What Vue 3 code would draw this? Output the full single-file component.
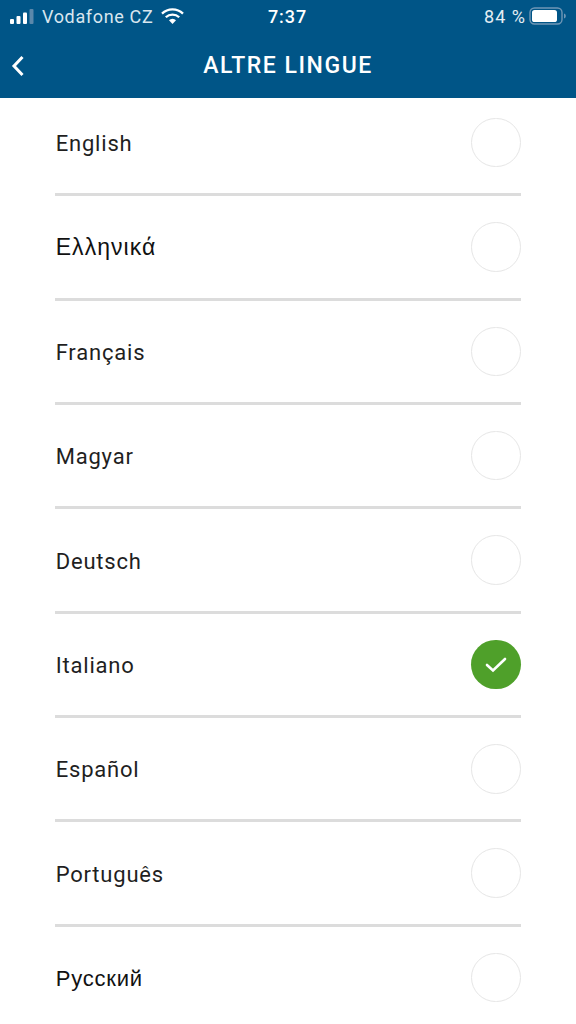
<script setup>
const languages = [
  { name: 'English', kind: '' },
  { name: 'Ελληνικά', kind: 'name-greek' },
  { name: 'Français', kind: '' },
  { name: 'Magyar', kind: '' },
  { name: 'Deutsch', kind: '' },
  { name: 'Italiano', kind: '', selected: true },
  { name: 'Español', kind: '' },
  { name: 'Português', kind: '' },
  { name: 'Русский', kind: 'name-cyrillic' }
]
</script>

<template>
  <div class="screen">
    <header class="header">
      <div class="status">
        <div class="status-left">
          <svg class="signal" width="25" height="16" viewBox="0 0 25 16">
            <rect x="0" y="11" width="4" height="5" rx="1" fill="#fff" />
            <rect x="6.500" y="8" width="4" height="8" rx="1" fill="#fff" />
            <rect x="13" y="4.500" width="4" height="11.500" rx="1" fill="#fff" />
            <rect x="19.500" y="1" width="4" height="15" rx="1" fill="#5b88ab" />
          </svg>
          <span class="carrier">Vodafone CZ</span>
          <svg class="wifi" width="23" height="17" viewBox="0 0 23 17">
            <path d="M1 5.600a15 15 0 0 1 21 0" fill="none" stroke="#fff" stroke-width="2.300" />
            <path d="M4.800 9.300a9.600 9.600 0 0 1 13.400 0" fill="none" stroke="#fff" stroke-width="2.300" />
            <path d="M8 12.300a4.800 4.800 0 0 1 7 0L11.500 16z" fill="#fff" />
          </svg>
        </div>
        <span class="time">7:37</span>
        <div class="status-right">
          <span class="percent">84 %</span>
          <svg width="38" height="20" viewBox="0 0 38 20">
            <rect x="1" y="2" width="32" height="16" rx="4.500" fill="none" stroke="#6f97b6" stroke-width="1.400" />
            <rect x="3" y="4" width="25" height="12" rx="2.600" fill="#fff" />
            <path d="M35 7.500c1.400.4 1.800 1.400 1.800 2.500s-.4 2.100-1.800 2.500z" fill="#6f97b6" />
          </svg>
        </div>
      </div>
      <div class="nav">
        <svg class="back" width="14" height="22" viewBox="0 0 14 22">
          <path d="M11.500 2 3 11l8.500 9" fill="none" stroke="#fff" stroke-width="3" />
        </svg>
        <h1 class="title">ALTRE LINGUE</h1>
      </div>
    </header>
    <ul class="list">
      <li v-for="lang in languages" :key="lang.name" class="row">
        <span class="name" :class="lang.kind">{{ lang.name }}</span>
        <span v-if="lang.selected" class="radio radio-on">
          <svg width="22" height="18" viewBox="0 0 22 18">
            <path d="M2 10 8 15.500 20 4" fill="none" stroke="#fff" stroke-width="2.600" stroke-linecap="round" />
          </svg>
        </span>
        <span v-else class="radio"></span>
      </li>
    </ul>
  </div>
</template>

<style scoped>
.screen {
  width: 576px;
  height: 1024px;
  overflow: hidden;
  background: #fff;
  font-family: Roboto, "Noto Sans", sans-serif;
}
.header {
  height: 98px;
  background: #005587;
  color: #fff;
  box-sizing: border-box;
  position: relative;
}
.status {
  height: 32px;
  display: grid;
  grid-template-columns: 1fr auto 1fr;
  align-items: center;
  padding: 0 9px 0 10px;
}
.status-left {
  display: flex;
  align-items: center;
}
.signal {
  margin-right: 7px;
}
.carrier {
  font-size: 18px;
  letter-spacing: 0.65px;
  color: #d9e6ef;
}
.wifi {
  margin-left: 8px;
}
.time {
  font-size: 18px;
  font-weight: 500;
  letter-spacing: 0.9px;
  transform: translateX(-1px);
}
.status-right {
  display: flex;
  align-items: center;
  justify-content: flex-end;
  gap: 3px;
}
.percent {
  font-size: 18px;
  letter-spacing: 1px;
  color: #e4edf3;
}
.nav {
  height: 66px;
  display: flex;
  align-items: center;
  justify-content: center;
  position: relative;
}
.back {
  position: absolute;
  left: 11px;
  top: 23px;
}
.title {
  margin: 0;
  font-size: 23px;
  font-weight: 500;
  letter-spacing: 1.55px;
}
.list {
  list-style: none;
  margin: 0;
  padding: 0 55.3px 0 55px;
}
.row {
  display: flex;
  align-items: center;
  justify-content: space-between;
  padding: 26px 0 25.900px;
  border-bottom: 3px solid #dcdcdc;
}
.row:first-child {
  padding-top: 19.750px;
}
.name {
  font-size: 22px;
  letter-spacing: 0.8px;
  color: #1f1f1f;
  padding: 2px 0 0 0.7px;
}
.name-cyrillic {
  font-family: "Liberation Sans", sans-serif;
  color: #111;
}
.name-greek {
  font-family: "Liberation Sans", sans-serif;
  font-size: 23px;
  letter-spacing: 1.05px;
  color: #111;
}
.radio {
  width: 49.500px;
  height: 49.500px;
  box-sizing: border-box;
  border-radius: 50%;
  border: 1.700px solid #e6e6e6;
  display: flex;
  align-items: center;
  justify-content: center;
}
.radio-on {
  background: #4fa02a;
  border: none;
}
</style>
